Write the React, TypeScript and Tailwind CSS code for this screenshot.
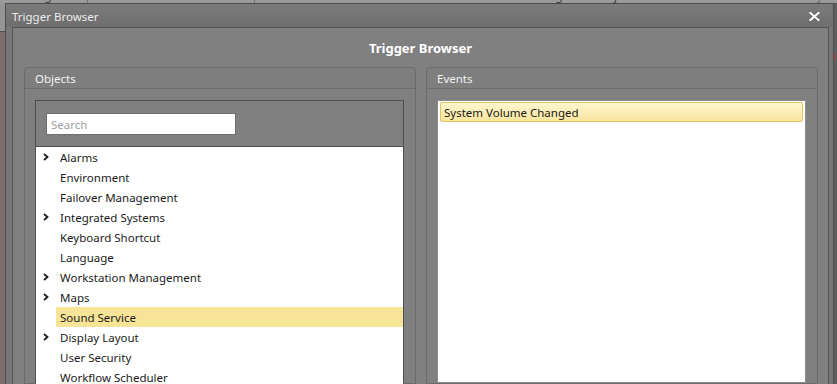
import React from "react";

const items: { label: string; chev?: boolean; selected?: boolean }[] = [
  { label: "Alarms", chev: true },
  { label: "Environment" },
  { label: "Failover Management" },
  { label: "Integrated Systems", chev: true },
  { label: "Keyboard Shortcut" },
  { label: "Language" },
  { label: "Workstation Management", chev: true },
  { label: "Maps", chev: true },
  { label: "Sound Service", selected: true },
  { label: "Display Layout", chev: true },
  { label: "User Security" },
  { label: "Workflow Scheduler" },
  { label: "Video" },
];

function Chevron() {
  return (
    <svg width="6" height="8" viewBox="0 0 6 8" className="block">
      <path d="M1 1 L4.5 4 L1 7" fill="none" stroke="#1e1e1e" strokeWidth="1.8" />
    </svg>
  );
}

export default function App() {
  return (
    <div
      className="w-[837px] h-[384px] overflow-hidden flex flex-col bg-[#6a6a6a] text-[11.5px]"
      style={{ fontFamily: '"Noto Sans", "Open Sans", sans-serif' }}
    >
      {/* background app toolbar remnant */}
      <div className="h-[3px] overflow-hidden bg-[#9a9a9a] shrink-0">
        <div className="-mt-[11px] h-[14px] flex items-end text-[#3a3a3a] leading-[14px] whitespace-nowrap">
          <span className="w-[27px]">ab</span>
          <span className="w-[70px]">Assignment</span>
          <span className="w-px h-full bg-[#6f6f6f]" />
          <span className="w-[193px]" />
          <span className="w-px h-full bg-[#6f6f6f]" />
          <span className="ml-[180px] w-[55px]">Client</span>
          <span className="w-[50px]">Tools</span>
          <span className="w-[82px]">Manager</span>
          <span className="w-[150px]">Project</span>
          <span className="w-[87px] text-[#6a6a6a]">Browser</span>
          <span className="text-[#6a6a6a]">Project</span>
        </div>
      </div>

      <div className="flex flex-1 min-h-0">
        {/* left background strip */}
        <div className="w-[5px] shrink-0 flex flex-col">
          <div className="h-[28px] bg-[#959595]" />
          <div className="h-px bg-[#555]" />
          <div className="flex-1 bg-[#7c6c6c]" />
        </div>

        {/* dialog window */}
        <div className="w-[829px] shrink-0 flex flex-col border-l border-t border-r border-[#4c4c4c] bg-[#777777]">
          {/* title bar */}
          <div className="h-[23px] shrink-0 flex items-center justify-between bg-gradient-to-b from-[#7b7b7b] to-[#6e6e6e] pl-[6px] pr-[13px]">
            <span className="text-[#ececec] leading-none pt-[3px]">Trigger Browser</span>
            <svg width="11" height="9" viewBox="0 0 11 9" className="block mt-[2px]">
              <path d="M1.5 1 L9.5 8 M9.5 1 L1.5 8" stroke="#5a5a5a" strokeWidth="3.6" strokeLinecap="square" />
              <path d="M1.5 1 L9.5 8 M9.5 1 L1.5 8" stroke="#ffffff" strokeWidth="2.2" strokeLinecap="square" />
            </svg>
          </div>

          <div className="flex flex-1 min-h-0 pl-[6px] pr-[4px]">
            <div className="flex-1 flex flex-col border-l border-t border-r border-[#555555] bg-[#808080]">
              {/* heading */}
              <div className="h-[39px] shrink-0 flex items-center justify-center pt-[2px]">
                <span className="text-white font-bold text-[13px]">Trigger Browser</span>
              </div>

              <div className="flex flex-1 min-h-0 pl-[11px] pr-[9px] gap-[10px]">
                {/* Objects panel */}
                <div className="w-[392px] shrink-0 flex flex-col border border-[#6b6b6b] rounded-t-[4px]">
                  <div className="h-[21px] shrink-0 flex items-center pl-[10px] pt-[1px] border-b border-[#6e6e6e] bg-[#7e7e7e] rounded-t-[4px]">
                    <span className="text-[#f2f2f2]">Objects</span>
                  </div>
                  <div className="flex-1 min-h-0 pt-[11px] pl-[10px] pr-[11px]">
                    <div className="h-full flex flex-col border border-[#4e4e4e]">
                      <div className="h-[45px] shrink-0 pt-[12px] pl-[10px]">
                        <div className="w-[190px] h-[22px] border border-[#6f6f6f] bg-white flex items-center pl-[4px] pt-[1px]">
                          <span className="text-[#a0a0a0]">Search</span>
                        </div>
                      </div>
                      <div className="flex-1 bg-white border-t border-[#4e4e4e]">
                        {items.map((it) => (
                          <div key={it.label} className="h-[20px] flex items-center">
                            <div className="w-[20px] shrink-0 flex items-center pl-[7px]">
                              {it.chev ? <Chevron /> : null}
                            </div>
                            <div
                              className={
                                "flex-1 h-full flex items-center pl-[4px] pt-[2px] text-[#1a1a1a] " +
                                (it.selected ? "bg-[#f7e496]" : "")
                              }
                            >
                              {it.label}
                            </div>
                          </div>
                        ))}
                      </div>
                    </div>
                  </div>
                </div>

                {/* Events panel */}
                <div className="w-[392px] shrink-0 flex flex-col border border-[#6b6b6b] rounded-t-[4px]">
                  <div className="h-[21px] shrink-0 flex items-center pl-[10px] pt-[1px] border-b border-[#6e6e6e] bg-[#7e7e7e] rounded-t-[4px]">
                    <span className="text-[#f2f2f2]">Events</span>
                  </div>
                  <div className="flex-1 min-h-0 pt-[11px] pl-[10px] pr-[11px]">
                    <div className="h-full bg-white border border-[#8c8c8c] pt-[1px] px-[2px]">
                      <div className="h-[20px] flex items-center pl-[3px] pt-[1px] border border-[#e2c46c] rounded-[2px] bg-gradient-to-b from-[#fff6cf] to-[#fae59c] text-[#1a1a1a]">
                        System Volume Changed
                      </div>
                    </div>
                  </div>
                </div>
              </div>
            </div>
          </div>
        </div>

        {/* right background strip */}
        <div className="flex-1 flex flex-col bg-[#5e5e5e]">
          <div className="h-[50px]" />
          <div className="h-[8px] w-px bg-[#b04040]" />
        </div>
      </div>
    </div>
  );
}
